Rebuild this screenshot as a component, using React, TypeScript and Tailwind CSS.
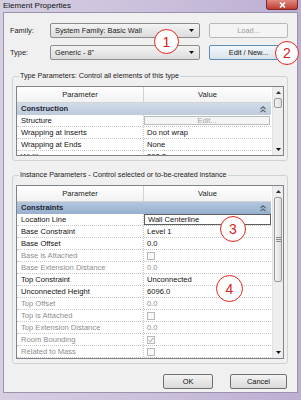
import React from "react";

type Row = {
  name: string;
  value?: string;
  kind?: "text" | "check" | "combo" | "edit";
  checked?: boolean;
  disabled?: boolean;
};

const TYPE_ROWS: Row[] = [
  { name: "Structure", kind: "edit" },
  { name: "Wrapping at Inserts", value: "Do not wrap" },
  { name: "Wrapping at Ends", value: "None" },
  { name: "Width", value: "203.2" },
];

const INSTANCE_ROWS: Row[] = [
  { name: "Location Line", value: "Wall Centerline", kind: "combo" },
  { name: "Base Constraint", value: "Level 1" },
  { name: "Base Offset", value: "0.0" },
  { name: "Base is Attached", kind: "check", disabled: true },
  { name: "Base Extension Distance", value: "0.0", disabled: true },
  { name: "Top Constraint", value: "Unconnected" },
  { name: "Unconnected Height", value: "6096.0" },
  { name: "Top Offset", value: "0.0", disabled: true },
  { name: "Top is Attached", kind: "check", disabled: true },
  { name: "Top Extension Distance", value: "0.0", disabled: true },
  { name: "Room Bounding", kind: "check", checked: true, disabled: true },
  { name: "Related to Mass", kind: "check", disabled: true },
];

function DownArrow() {
  return (
    <svg width="5" height="3" viewBox="0 0 5 3">
      <path d="M0 0h5L2.5 3z" fill="#111" />
    </svg>
  );
}

function Combo({ text, width }: { text: string; width: string }) {
  return (
    <div
      className={`${width} h-[15px] flex items-center justify-between pl-[4px] pr-[5px] border border-[#8b8c8e] rounded-[2px] bg-gradient-to-b from-[#f4f4f4] to-[#dcdcdc]`}
    >
      <span className="text-[7.4px] leading-[10px] text-[#1a1a1a]">{text}</span>
      <DownArrow />
    </div>
  );
}

function Button({ children, className }: { children: React.ReactNode; className: string }) {
  return (
    <div
      className={`h-[15px] flex items-center justify-center rounded-[2px] text-[7.4px] leading-[10px] ${className}`}
    >
      {children}
    </div>
  );
}

function Chevrons() {
  return (
    <svg width="6" height="7" viewBox="0 0 6 7">
      <path d="M0.5 3L3 0.8 5.5 3M0.5 6.2L3 4 5.5 6.2" stroke="#5a6470" strokeWidth="1.1" fill="none" />
    </svg>
  );
}

function Checkbox({ checked }: { checked?: boolean }) {
  return (
    <div className="w-[8px] h-[8px] border border-[#b9b9b9] bg-[#f7f7f7] flex items-center justify-center">
      {checked && (
        <svg width="6" height="6" viewBox="0 0 6 6">
          <path d="M0.8 3.2L2.3 4.8 5.3 0.9" stroke="#a0a0a0" strokeWidth="1" fill="none" />
        </svg>
      )}
    </div>
  );
}

function Scrollbar({ thumb, grip }: { thumb: string; grip?: boolean }) {
  return (
    <div className="w-[11px] flex flex-col bg-[#eeeeee] border-l border-[#e2e2e2]">
      <div className="h-[11px] flex items-center justify-center">
        <svg width="5" height="3" viewBox="0 0 5 3">
          <path d="M0 3h5L2.5 0z" fill="#333" />
        </svg>
      </div>
      <div className={`${thumb} mx-[1px] border border-[#9a9a9a] rounded-[2px] bg-gradient-to-r from-[#f4f4f4] to-[#dedede] flex items-center justify-center`}>
        {grip && (
          <div className="w-[5px] flex flex-col gap-[1px]">
            <div className="h-[1px] bg-[#8a8a8a]" />
            <div className="h-[1px] bg-[#8a8a8a]" />
            <div className="h-[1px] bg-[#8a8a8a]" />
          </div>
        )}
      </div>
      <div className="flex-1" />
      <div className="h-[11px] flex items-center justify-center">
        <DownArrow />
      </div>
    </div>
  );
}

function Header() {
  return (
    <div className="h-[16px] flex border-b border-[#d3d3d3] bg-gradient-to-b from-white to-[#f2f2f2] text-[7.6px] leading-[15px] text-[#1a1a1a]">
      <div className="w-[127px] text-center border-r border-[#d3d3d3]">Parameter</div>
      <div className="flex-1 text-center">Value</div>
    </div>
  );
}

function GroupRow({ name, tone }: { name: string; tone: string }) {
  return (
    <div className={`h-[12px] flex items-center justify-between pl-[4px] pr-[5px] ${tone}`}>
      <span className="text-[7.6px] leading-[12px] font-bold text-[#1f2733]">{name}</span>
      <Chevrons />
    </div>
  );
}

function ValueCell({ row }: { row: Row }) {
  const color = row.disabled ? "text-[#8e8e8e]" : "text-[#111]";
  if (row.kind === "edit") {
    return (
      <div className="flex-1 h-full flex items-center pr-[1px]">
        <div className="w-full h-[9px] border border-[#b7bcc0] bg-[#f5f5f5] flex items-center justify-center text-[7.4px] leading-[9px] text-[#a3a3a3]">
          Edit...
        </div>
      </div>
    );
  }
  if (row.kind === "combo") {
    return (
      <div className="flex-1 h-full border border-[#5e5e5e] bg-white flex items-center pl-[3px] text-[7.6px] leading-[10px] text-[#111]">
        {row.value}
      </div>
    );
  }
  if (row.kind === "check") {
    return (
      <div className="flex-1 h-full flex items-center pl-[3px]">
        <Checkbox checked={row.checked} />
      </div>
    );
  }
  return <div className={`flex-1 pl-[3px] text-[7.6px] leading-[11px] ${color}`}>{row.value}</div>;
}

function DataRow({ row }: { row: Row }) {
  const color = row.disabled ? "text-[#8e8e8e]" : "text-[#111]";
  return (
    <div className="h-[12px] flex items-stretch border-b border-dotted border-[#c6c6c6] bg-white">
      <div className={`w-[127px] pl-[4px] border-r border-dotted border-[#c6c6c6] text-[7.6px] leading-[11px] ${color}`}>
        {row.name}
      </div>
      <ValueCell row={row} />
    </div>
  );
}

function Circle({ n, className }: { n: string; className: string }) {
  return (
    <div
      className={`absolute rounded-full border-[1.5px] border-[#e3241b] bg-white flex items-center justify-center text-[14px] leading-none text-[#d8231a] ${className}`}
    >
      {n}
    </div>
  );
}

export default function App() {
  return (
    <div className="relative w-[301px] h-[400px] flex flex-col px-[3px] pb-[7px] bg-gradient-to-r from-[#d6cfe2] via-[#cbc0dc] to-[#bcaed3] font-['Liberation_Sans',Arial,sans-serif]">
      {/* title bar */}
      <div className="h-[12px] flex items-start justify-between">
        <span className="text-[8px] leading-[12px] text-[#111]">Element Properties</span>
        <div className="w-[32px] h-[10px] rounded-b-[3px] border border-t-0 border-[#7a2b2b] bg-gradient-to-b from-[#e08a80] to-[#c13a30] flex items-center justify-center">
          <svg width="7" height="6" viewBox="0 0 7 6">
            <path d="M1 0.5l5 5M6 0.5l-5 5" stroke="white" strokeWidth="1.6" />
          </svg>
        </div>
      </div>

      {/* client area */}
      <div className="flex-1 flex flex-col bg-[#f0f0f0] border border-[#9c92ad] pt-[10px] pl-[8px] pr-[9px] text-[#1a1a1a]">
        <div className="h-[15px] flex items-center">
          <span className="w-[38px] -ml-[2px] mr-[2px] text-[7.4px] leading-[10px]">Family:</span>
          <Combo text="System Family: Basic Wall" width="w-[150px]" />
          <Button className="ml-[9px] w-[79px] border border-[#b5b9bc] bg-[#f4f4f4] text-[#9a9a9a]">Load...</Button>
        </div>
        <div className="mt-[7px] h-[15px] flex items-center">
          <span className="w-[38px] -ml-[2px] mr-[2px] text-[7.4px] leading-[10px]">Type:</span>
          <Combo text="Generic - 8&quot;" width="w-[150px]" />
          <Button className="ml-[9px] w-[79px] border border-[#5f8db3] bg-gradient-to-b from-[#f2f7fb] to-[#d9e3ea] text-[#111]">
            Edit / New...
          </Button>
        </div>

        <fieldset className="mt-[11px] border border-[#cfd2d5] rounded-[3px] px-[3px] pb-[4px]">
          <legend className="ml-[3px] px-[1px] text-[7.2px] leading-[10px]">
            Type Parameters: Control all elements of this type
          </legend>
          <div className="mt-[5px] flex border border-[#7f848b] bg-white">
            <div className="w-[254px] flex flex-col">
              <Header />
              <div className="h-[52px] overflow-hidden">
                <GroupRow name="Construction" tone="bg-gradient-to-b from-[#d2dce8] to-[#bccbdc]" />
                {TYPE_ROWS.map((r) => (
                  <DataRow key={r.name} row={r} />
                ))}
              </div>
            </div>
            <div className="flex-1" />
            <Scrollbar thumb="h-[10px]" />
          </div>
        </fieldset>

        <fieldset className="mt-[9px] border border-[#cfd2d5] rounded-[3px] px-[3px] pb-[4px]">
          <legend className="ml-[3px] px-[1px] text-[7.2px] leading-[10px]">
            Instance Parameters - Control selected or to-be-created instance
          </legend>
          <div className="mt-[5px] flex border border-[#7f848b] bg-white">
            <div className="w-[254px] flex flex-col">
              <Header />
              <div className="h-[156px] overflow-hidden">
                <GroupRow name="Constraints" tone="bg-gradient-to-b from-[#b3c6dd] to-[#97b0cf]" />
                {INSTANCE_ROWS.map((r) => (
                  <DataRow key={r.name} row={r} />
                ))}
              </div>
            </div>
            <div className="flex-1" />
            <Scrollbar thumb="h-[85px]" grip />
          </div>
        </fieldset>

        <div className="mt-[10px] flex justify-end gap-[17px] pr-[1px]">
          <Button className="w-[50px] border border-[#707070] bg-gradient-to-b from-[#f3f3f3] to-[#dadada] text-[#111]">OK</Button>
          <Button className="w-[57px] border border-[#707070] bg-gradient-to-b from-[#f3f3f3] to-[#dadada] text-[#111]">Cancel</Button>
        </div>
      </div>

      {/* annotations */}
      <Circle n="1" className="left-[154px] top-[29px] w-[25px] h-[25px]" />
      <Circle n="2" className="left-[275px] top-[41px] w-[24px] h-[24px]" />
      <Circle n="3" className="left-[220px] top-[216px] w-[26px] h-[26px]" />
      <Circle n="4" className="left-[216px] top-[275px] w-[27px] h-[27px]" />
    </div>
  );
}
